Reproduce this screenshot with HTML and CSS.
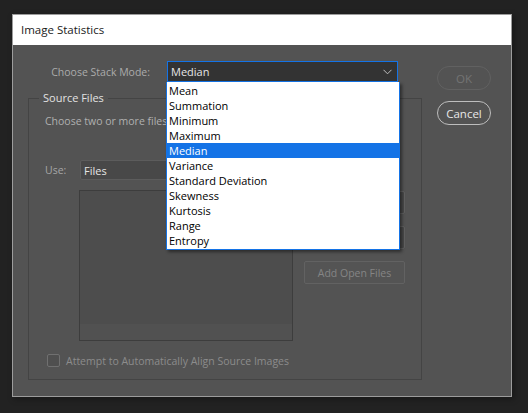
FILE: index.html
```html
<!DOCTYPE html>
<html>
<head>
<meta charset="utf-8">
<link rel="stylesheet" href="styles.css">
</head>
<body>
<div class="window">
  <div class="titlebar">Image Statistics</div>
  <div class="content">
    <div class="main">
      <div class="stack-row">
        <span class="stack-label">Choose Stack Mode:</span>
        <div class="select focused">
          <span>Median</span>
          <svg class="chev" width="9" height="6" viewBox="0 0 9 6"><path d="M0.5 0.8 L4.5 4.8 L8.5 0.8" fill="none" stroke="#bdbdbd" stroke-width="1"/></svg>
        </div>
      </div>
      <div class="group">
        <span class="legend">Source Files</span>
        <p class="hint">Choose two or more files to load into Image Stack.</p>
        <div class="use-row">
          <span class="use-label">Use:</span>
          <div class="select plain"><span>Files</span></div>
        </div>
        <div class="files-row">
          <div class="filelist"><div class="filelist-bottom"></div></div>
          <div class="side-buttons">
            <div class="btn rect dark">Browse...</div>
            <div class="btn rect dark">Remove</div>
            <div class="btn rect disabled">Add Open Files</div>
          </div>
        </div>
        <div class="check-row">
          <span class="checkbox"></span>
          <span class="check-label">Attempt to Automatically Align Source Images</span>
        </div>
      </div>
    </div>
    <div class="actions">
      <div class="btn pill disabled">OK</div>
      <div class="btn pill">Cancel</div>
    </div>
  </div>
  <ul class="dropdown">
    <li>Mean</li>
    <li>Summation</li>
    <li>Minimum</li>
    <li>Maximum</li>
    <li class="selected">Median</li>
    <li>Variance</li>
    <li>Standard Deviation</li>
    <li>Skewness</li>
    <li>Kurtosis</li>
    <li>Range</li>
    <li>Entropy</li>
  </ul>
</div>
</body>
</html>
```

FILE: styles.css
```css
* { box-sizing: border-box; }
html, body {
  margin: 0;
  padding: 0;
  background: #222222;
  font-family: "Open Sans", "Noto Sans", "Liberation Sans", sans-serif;
  font-size: 10.5px;
}
body { padding: 14px 0 0 12px; height: 413px; overflow: hidden; }
.window {
  position: relative;
  width: 500px;
  height: 383px;
  border: 1px solid #9c9c9c;
  background: #535353;
  box-shadow: 2px 2px 6px rgba(0,0,0,0.35);
}
.titlebar {
  height: 30px;
  background: #ffffff;
  color: #1a1a1a;
  font-size: 11.5px;
  line-height: 30px;
  padding-left: 8px;
}
.content {
  display: flex;
  padding: 0 0 0 15px;
}
.main { width: 394px; }
.stack-row {
  display: flex;
  align-items: center;
  margin-top: 16px;
  height: 21px;
}
.stack-label {
  width: 123px;
  text-align: right;
  color: #ababab;
  padding-right: 1px;
}
.select {
  display: flex;
  align-items: center;
  justify-content: space-between;
  color: #e6e6e6;
}
.select.focused {
  margin-left: 16px;
  width: 231px;
  height: 21px;
  background: #333333;
  border: 1px solid #1473e6;
  padding: 0 5px 0 3px;
  font-size: 11px;
}
.chev { margin-top: 1px; }
.group {
  position: relative;
  margin-top: 16px;
  height: 282px;
  border: 1px solid #444444;
  padding-left: 16px;
}
.legend {
  position: absolute;
  left: 10px;
  top: -9px;
  padding: 0 4px;
  background: #535353;
  color: #e2e2e2;
  line-height: 16px;
  font-size: 11px;
}
.hint {
  margin: 14px 0 0 0;
  line-height: 16px;
  color: #b0b0b0;
  white-space: nowrap;
}
.use-row {
  display: flex;
  align-items: center;
  margin-top: 31px;
  height: 20px;
}
.use-label { width: 35px; color: #a6a6a6; }
.select.plain {
  width: 213px;
  height: 20px;
  background: #484848;
  border: 1px solid #5c5c5c;
  border-radius: 2px;
  padding-left: 3px;
  font-size: 11px;
}
.files-row {
  display: flex;
  margin-top: 10px;
}
.filelist {
  position: relative;
  margin-left: 34px;
  width: 214px;
  height: 151px;
  background: #4d4d4d;
  border: 1px solid #3d3d3d;
}
.filelist-bottom {
  position: absolute;
  left: 0; right: 0; bottom: 0;
  height: 16px;
  background: #515151;
}
.side-buttons {
  display: flex;
  flex-direction: column;
  gap: 12px;
  margin-left: 11px;
  margin-top: 1px;
}
.btn {
  display: flex;
  align-items: center;
  justify-content: center;
  color: #e8e8e8;
}
.btn.rect {
  width: 101px;
  height: 23px;
  border: 1px solid #616161;
  border-radius: 2px;
}
.btn.dark { background: #494949; }
.btn.disabled { color: #858585; }
.btn.rect.disabled { background: #545454; border-color: #626262; }
.check-row {
  display: flex;
  align-items: center;
  margin-top: 13px;
  margin-left: 2px;
  height: 13px;
}
.checkbox {
  width: 13px;
  height: 13px;
  border: 1px solid #707070;
  border-radius: 2px;
  background: #4f4f4f;
}
.check-label { margin-left: 6px; color: #8c8c8c; }
.actions {
  display: flex;
  flex-direction: column;
  gap: 11px;
  margin-left: 15px;
  padding-top: 21px;
}
.btn.pill {
  width: 54px;
  height: 24px;
  border: 1px solid #bdbdbd;
  border-radius: 12px;
  font-size: 11.5px;
}
.btn.pill.disabled { border-color: #616161; color: #747474; }
.dropdown {
  position: absolute;
  left: 153px;
  top: 67px;
  width: 234px;
  margin: 0;
  padding: 1px 0 1px 0;
  list-style: none;
  background: #ffffff;
  border: 1px solid #1473e6;
  border-top: none;
  box-shadow: 2px 2px 3px rgba(0,0,0,0.45);
  font-size: 11px;
}
.dropdown li {
  height: 15px;
  line-height: 15px;
  padding-left: 2px;
  color: #000000;
  white-space: nowrap;
}
.dropdown li.selected { background: #1473e6; color: #ffffff; }
```
